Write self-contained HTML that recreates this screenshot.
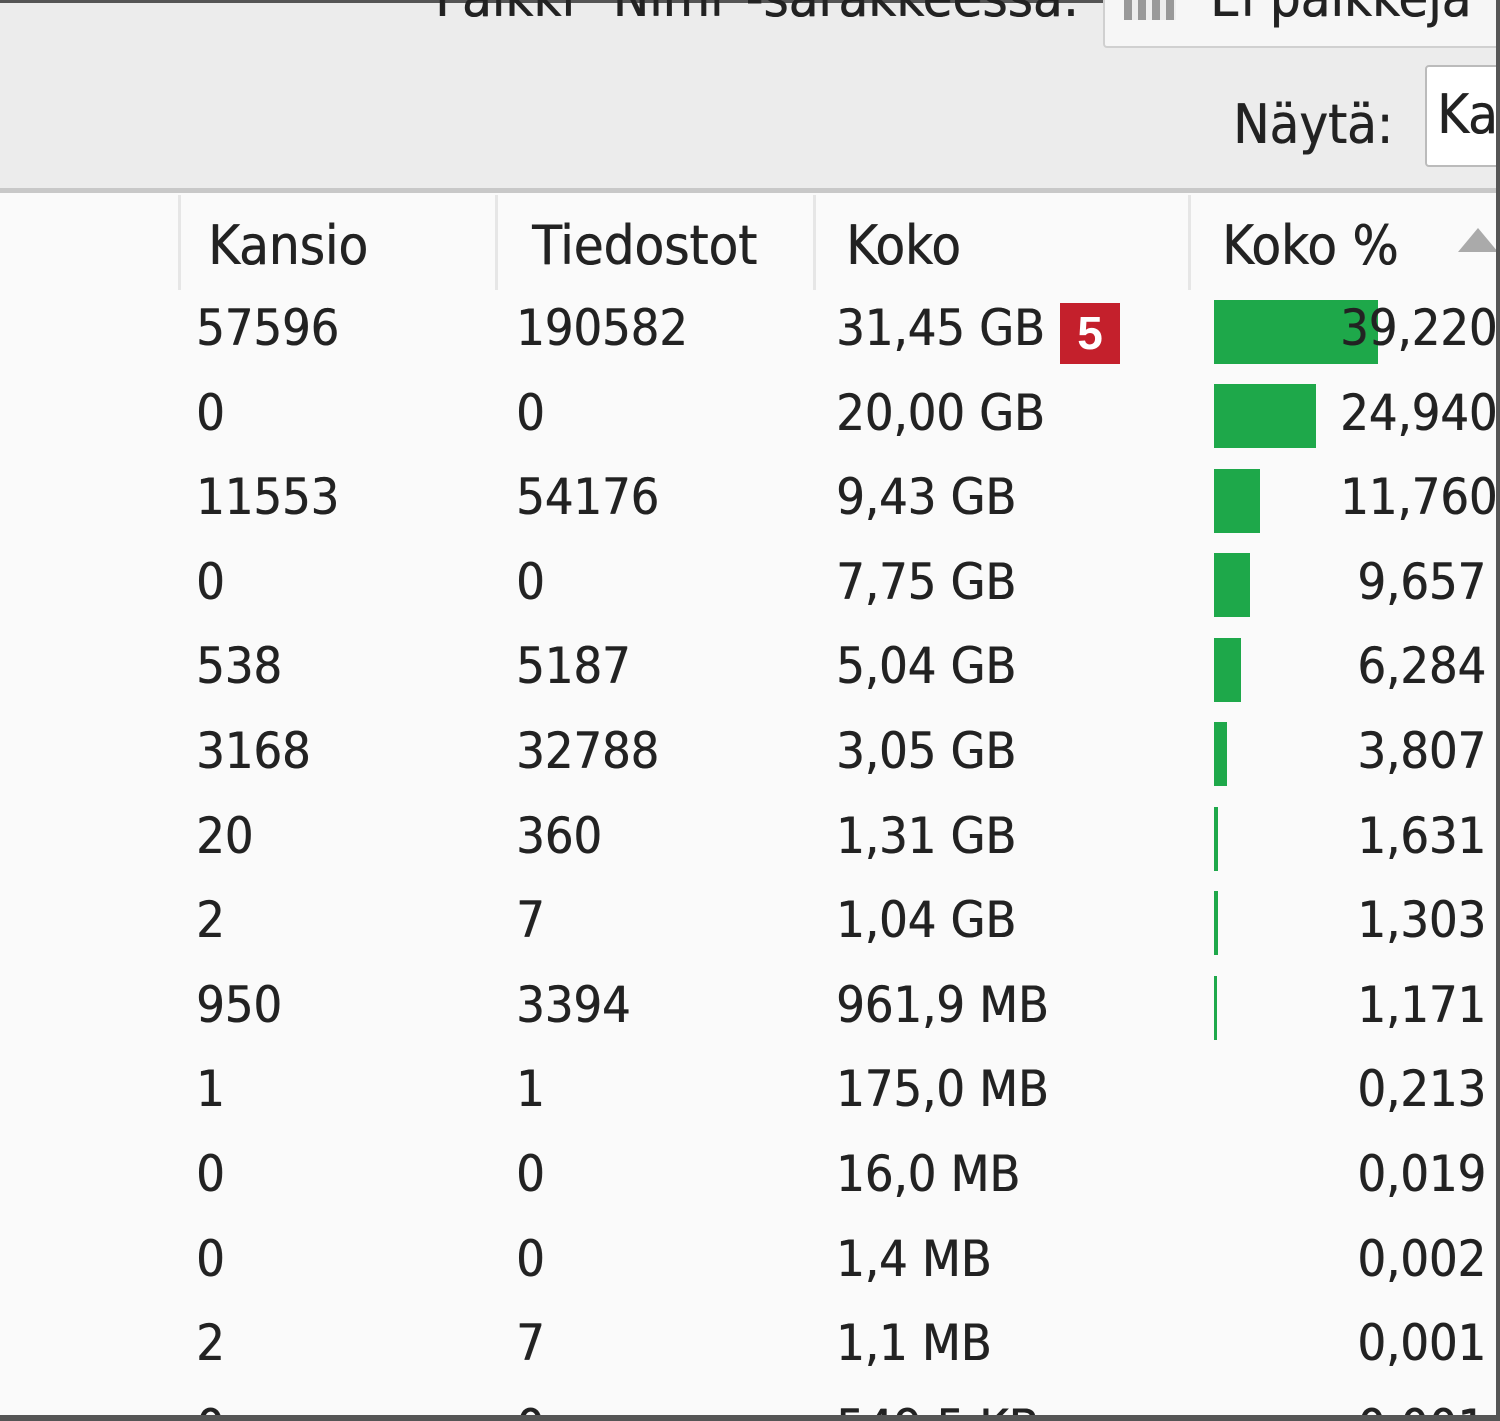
<!DOCTYPE html>
<html style="overflow:hidden;height:1421px"><head><meta charset="utf-8"><style>
html,body{overflow:hidden}
body{margin:0;width:1500px;height:1421px;overflow:hidden;background:#fafafa;font-family:"DejaVu Sans Condensed","Liberation Sans",sans-serif;color:#222;position:relative}
.t{position:absolute;font-size:50px;line-height:60px;white-space:nowrap;text-shadow:0.6px 0 #333}
.h{font-size:54px}
.r{text-align:right}
.bar{position:absolute;background:#1ea84a;height:64px;left:1214px}
</style></head><body>
<div style="position:absolute;left:0;top:0;width:1500px;height:190px;background:#ececec"></div>
<div style="position:absolute;left:0;top:0;width:1500px;height:3px;background:#555"></div>
<div style="position:absolute;left:0;top:188px;width:1500px;height:5px;background:#c8c8c8"></div>
<div class="t h" style="left:435px;top:-32px">Palkki "Nimi"-sarakkeessa:</div>
<div style="position:absolute;left:1103px;top:-4px;width:400px;height:48px;background:#f6f6f6;border:2px solid #d0d0d0;border-radius:4px"></div>
<div style="position:absolute;left:1124px;top:0;width:52px;height:20px;background:repeating-linear-gradient(90deg,#999 0 8px,#eee 8px 14px)"></div>
<div class="t h" style="left:1210px;top:-32px">Ei palkkeja</div>
<div class="t h" style="left:1233px;top:95px">Näytä:</div>
<div style="position:absolute;left:1425px;top:65px;width:80px;height:98px;background:#fff;border:2px solid #bbb;border-radius:4px"></div>
<div class="t h" style="left:1437px;top:85px">Ka</div>
<div style="position:absolute;left:178px;top:195px;width:3px;height:95px;background:#e6e6e6"></div>
<div style="position:absolute;left:495px;top:195px;width:3px;height:95px;background:#e6e6e6"></div>
<div style="position:absolute;left:813px;top:195px;width:3px;height:95px;background:#e6e6e6"></div>
<div style="position:absolute;left:1188px;top:195px;width:3px;height:95px;background:#e6e6e6"></div>
<div class="t h" style="left:208px;top:216px">Kansio</div>
<div class="t h" style="left:532px;top:216px">Tiedostot</div>
<div class="t h" style="left:846px;top:216px">Koko</div>
<div class="t h" style="left:1222px;top:216px">Koko %</div>
<div style="position:absolute;left:1458px;top:228px;width:0;height:0;border-left:20px solid transparent;border-right:20px solid transparent;border-bottom:24px solid #aaa"></div>
<div class="bar" style="top:300px;width:164px"></div>
<div class="bar" style="top:384px;width:102px"></div>
<div class="bar" style="top:469px;width:46px"></div>
<div class="bar" style="top:553px;width:36px"></div>
<div class="bar" style="top:638px;width:27px"></div>
<div class="bar" style="top:722px;width:13px"></div>
<div class="bar" style="top:807px;width:4px"></div>
<div class="bar" style="top:891px;width:4px"></div>
<div class="bar" style="top:976px;width:3px"></div>
<div style="position:absolute;left:1060px;top:303px;width:60px;height:61px;background:#c4202c;color:#fff;font:bold 46px/61px 'Liberation Sans',sans-serif;text-align:center">5</div>
<div id="rows"></div>
<script>
var d=[["57596","190582","31,45 GB","39,220"],["0","0","20,00 GB","24,940"],["11553","54176","9,43 GB","11,760"],["0","0","7,75 GB","9,657"],["538","5187","5,04 GB","6,284"],["3168","32788","3,05 GB","3,807"],["20","360","1,31 GB","1,631"],["2","7","1,04 GB","1,303"],["950","3394","961,9 MB","1,171"],["1","1","175,0 MB","0,213"],["0","0","16,0 MB","0,019"],["0","0","1,4 MB","0,002"],["2","7","1,1 MB","0,001"],["0","0","549,5 KB","0,001"]];
var h="";d.forEach(function(r,i){var y=298+i*84.6;
var pr=(i<3)?'left:1340px':'right:14px';
h+='<div class="t" style="left:196px;top:'+y+'px">'+r[0]+'</div><div class="t" style="left:516px;top:'+y+'px">'+r[1]+'</div><div class="t" style="left:836px;top:'+y+'px">'+r[2]+'</div><div class="t" style="'+pr+';top:'+y+'px">'+r[3]+'</div>';});
document.getElementById("rows").innerHTML=h;
</script>
<div style="position:absolute;left:1496px;top:0;width:4px;height:1421px;background:#555"></div>
<div style="position:absolute;left:0;top:1415px;width:1500px;height:6px;background:#555"></div>
</body></html>
